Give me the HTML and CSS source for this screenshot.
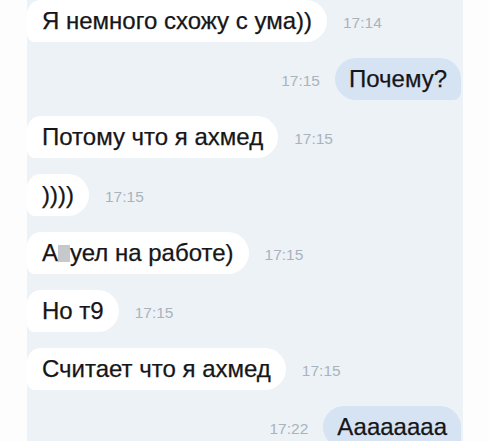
FILE: index.html
```html
<!DOCTYPE html>
<html lang="ru">
<head>
<meta charset="utf-8">
<link rel="stylesheet" href="styles.css">
</head>
<body>
<div class="page">
  <div class="chat">
    <div class="row in"><div class="bubble">Я немного схожу с ума))</div><span class="time">17:14</span></div>
    <div class="row out"><span class="time">17:15</span><div class="bubble">Почему?</div></div>
    <div class="row in"><div class="bubble">Потому что я ахмед</div><span class="time">17:15</span></div>
    <div class="row in"><div class="bubble">))))</div><span class="time">17:15</span></div>
    <div class="row in"><div class="bubble">А<span class="censor"></span>уел на работе)</div><span class="time">17:15</span></div>
    <div class="row in"><div class="bubble">Но т9</div><span class="time">17:15</span></div>
    <div class="row in"><div class="bubble">Считает что я ахмед</div><span class="time">17:15</span></div>
    <div class="row out"><span class="time">17:22</span><div class="bubble">Аааааааа</div></div>
  </div>
</div>
</body>
</html>
```

FILE: styles.css
```css
html, body {
  margin: 0;
  padding: 0;
  background: #fdfdfd;
}
.page {
  width: 489px;
  height: 441px;
  overflow: hidden;
  padding: 0 26px 0 27px;
  box-sizing: border-box;
}
.chat {
  background: #edf2f7;
  height: 441px;
  display: flex;
  flex-direction: column;
  gap: 16px;
  font-family: "Liberation Sans", Arial, sans-serif;
}
.row {
  display: flex;
  align-items: center;
  gap: 16px;
  height: 42px;
  flex: none;
}
.row.out {
  justify-content: flex-end;
  gap: 15px;
  padding-right: 2px;
}
.bubble {
  height: 42px;
  box-sizing: border-box;
  display: flex;
  align-items: center;
  padding: 0 15px 0 15px;
  border-radius: 21px;
  font-size: 24px;
  color: #161618;
  -webkit-text-stroke: 0.25px #161618;
  white-space: nowrap;
  position: relative;
}
.in .bubble {
  background: #ffffff;
  border-bottom-left-radius: 8px;
  border-top-left-radius: 14px;
}
.out .bubble {
  background: #d6e3f3;
  border-bottom-right-radius: 8px;
  padding: 0 14px 0 14px;
}
.time {
  font-size: 15.5px;
  color: #aab2bc;
  white-space: nowrap;
  padding-top: 3px;
}
.censor {
  display: inline-block;
  width: 12px;
  height: 17px;
  background: #c6c9cc;
  vertical-align: -1px;
}
```
